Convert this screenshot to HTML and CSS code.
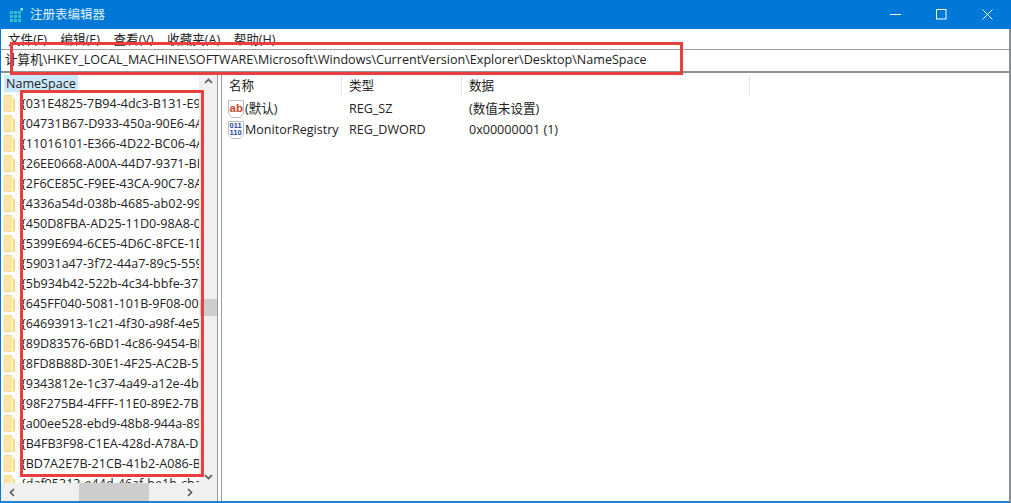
FILE: index.html
```html
<!DOCTYPE html>
<html lang="zh-CN">
<head>
<meta charset="utf-8">
<title>注册表编辑器</title>
<link rel="stylesheet" href="styles.css">
</head>
<body>
<svg class="defs" width="0" height="0" aria-hidden="true">
  <symbol id="folder" viewBox="0 0 14 17">
    <path d="M3 .5H10.5L11.5 3V16.5H3Z" fill="#fce7a6" stroke="#f3dc94"/>
    <path d="M11.5 3.5H14V16.5H11.5Z" fill="#f7d97f"/>
    <path d="M11.5 3V16" stroke="#fff6d8"/>
  </symbol>
</svg>
<div class="window">
  <header class="titlebar">
    <div class="title-left">
      <svg class="app-icon" width="14" height="14" viewBox="0 0 14 14">
        <g fill="#35c2c9">
          <rect x="0" y="3" width="3" height="3"/><rect x="4" y="3" width="3" height="3"/><rect x="8" y="3" width="3" height="3"/>
          <rect x="0" y="7" width="3" height="3"/><rect x="4" y="7" width="3" height="3"/><rect x="8" y="7" width="3" height="3"/>
          <rect x="0" y="11" width="3" height="3"/><rect x="4" y="11" width="3" height="3"/><rect x="8" y="11" width="3" height="3"/>
        </g>
        <rect x="10.5" y="0" width="2.5" height="2.5" fill="#9fe3e6"/>
      </svg>
      <span class="title-text">注册表编辑器</span>
    </div>
    <div class="controls">
      <svg width="11" height="11" viewBox="0 0 11 11"><path d="M0 5.5H11" stroke="#fff"/></svg>
      <svg width="11" height="11" viewBox="0 0 11 11"><rect x=".5" y=".5" width="9.5" height="9.5" fill="none" stroke="#fff"/></svg>
      <svg width="11" height="11" viewBox="0 0 11 11"><path d="M.5.5L10.5 10.5M10.5.5L.5 10.5" stroke="#fff"/></svg>
    </div>
  </header>
  <nav class="menu">
    <span>文件(F)</span><span>编辑(E)</span><span>查看(V)</span><span>收藏夹(A)</span><span>帮助(H)</span>
  </nav>
  <div class="address">计算机\HKEY_LOCAL_MACHINE\SOFTWARE\Microsoft\Windows\CurrentVersion\Explorer\Desktop\NameSpace</div>
  <main class="panes">
    <section class="tree">
      <div class="tree-body">
        <div class="tree-list">
          <div class="tree-head"><span class="selected">NameSpace</span></div>
          <div class="node"><svg class="fld"><use href="#folder"/></svg><span>{031E4825-7B94-4dc3-B131-E946B44C8DD5}</span></div>
          <div class="node"><svg class="fld"><use href="#folder"/></svg><span>{04731B67-D933-450a-90E6-4ACD2E9408FE}</span></div>
          <div class="node"><svg class="fld"><use href="#folder"/></svg><span>{11016101-E366-4D22-BC06-4ADA335C892B}</span></div>
          <div class="node"><svg class="fld"><use href="#folder"/></svg><span>{26EE0668-A00A-44D7-9371-BEB064C98683}</span></div>
          <div class="node"><svg class="fld"><use href="#folder"/></svg><span>{2F6CE85C-F9EE-43CA-90C7-8A9BD53A2467}</span></div>
          <div class="node"><svg class="fld"><use href="#folder"/></svg><span>{4336a54d-038b-4685-ab02-99bb52d3fb8b}</span></div>
          <div class="node"><svg class="fld"><use href="#folder"/></svg><span>{450D8FBA-AD25-11D0-98A8-0800361B1103}</span></div>
          <div class="node"><svg class="fld"><use href="#folder"/></svg><span>{5399E694-6CE5-4D6C-8FCE-1D8870FDCBA0}</span></div>
          <div class="node"><svg class="fld"><use href="#folder"/></svg><span>{59031a47-3f72-44a7-89c5-5595fe6b30ee}</span></div>
          <div class="node"><svg class="fld"><use href="#folder"/></svg><span>{5b934b42-522b-4c34-bbfe-37a3ef7b9c90}</span></div>
          <div class="node"><svg class="fld"><use href="#folder"/></svg><span>{645FF040-5081-101B-9F08-00AA002F954E}</span></div>
          <div class="node"><svg class="fld"><use href="#folder"/></svg><span>{64693913-1c21-4f30-a98f-4e52906d3b56}</span></div>
          <div class="node"><svg class="fld"><use href="#folder"/></svg><span>{89D83576-6BD1-4c86-9454-BEB04E94C819}</span></div>
          <div class="node"><svg class="fld"><use href="#folder"/></svg><span>{8FD8B88D-30E1-4F25-AC2B-553D3D65F0EA}</span></div>
          <div class="node"><svg class="fld"><use href="#folder"/></svg><span>{9343812e-1c37-4a49-a12e-4b2d810d956b}</span></div>
          <div class="node"><svg class="fld"><use href="#folder"/></svg><span>{98F275B4-4FFF-11E0-89E2-7B86DFD72085}</span></div>
          <div class="node"><svg class="fld"><use href="#folder"/></svg><span>{a00ee528-ebd9-48b8-944a-8942113d46ac}</span></div>
          <div class="node"><svg class="fld"><use href="#folder"/></svg><span>{B4FB3F98-C1EA-428d-A78A-D1F5659CBA93}</span></div>
          <div class="node"><svg class="fld"><use href="#folder"/></svg><span>{BD7A2E7B-21CB-41b2-A086-B309680C6B7E}</span></div>
          <div class="node"><svg class="fld"><use href="#folder"/></svg><span>{daf95313-e44d-46af-be1b-cbacea2c3065}</span></div>
        </div>
        <div class="vscroll">
          <svg class="arrow" width="9" height="6" viewBox="0 0 9 6"><path d="M1 5L4.5 1.5L8 5" fill="none" stroke="#555" stroke-width="1.6"/></svg>
          <div class="vtrack"><div class="vthumb"></div></div>
          <svg class="arrow" width="9" height="6" viewBox="0 0 9 6"><path d="M1 1L4.5 4.5L8 1" fill="none" stroke="#555" stroke-width="1.6"/></svg>
        </div>
      </div>
      <div class="hscroll">
        <svg width="6" height="9" viewBox="0 0 6 9"><path d="M5 1L1.5 4.5L5 8" fill="none" stroke="#555" stroke-width="1.6"/></svg>
        <div class="htrack"><div class="hthumb"></div></div>
        <svg width="6" height="9" viewBox="0 0 6 9"><path d="M1 1L4.5 4.5L1 8" fill="none" stroke="#555" stroke-width="1.6"/></svg>
      </div>
    </section>
    <section class="list">
      <div class="row head">
        <div class="c1 cell">名称</div><div class="c2 cell">类型</div><div class="c3 cell">数据</div><div class="c4"></div>
      </div>
      <div class="row item">
        <div class="c1 name">
          <svg width="16" height="18" viewBox="0 0 16 18"><path d="M.5.5H15.5V13.5L12.5 17.5H3.5L.5 13.5Z" fill="#fff" stroke="#b9bfc9"/><text x="1.5" y="11.5" class="ab">ab</text></svg>
          <span>(默认)</span>
        </div>
        <div class="c2">REG_SZ</div><div class="c3">(数值未设置)</div>
      </div>
      <div class="row item">
        <div class="c1 name">
          <svg width="16" height="18" viewBox="0 0 16 18"><path d="M.5.5H15.5V13.5L12.5 17.5H3.5L.5 13.5Z" fill="#fff" stroke="#b9bfc9"/><text x="1.5" y="7" class="bin">011</text><text x="1.5" y="14" class="bin">110</text></svg>
          <span>MonitorRegistry</span>
        </div>
        <div class="c2">REG_DWORD</div><div class="c3">0x00000001 (1)</div>
      </div>
    </section>
  </main>
  <div class="mark mark-address"></div>
  <div class="mark mark-tree"></div>
</div>
</body>
</html>
```
FILE: styles.css
```css
* { box-sizing: border-box; }
html, body { margin: 0; height: 100%; }
body { background: #fff; overflow: hidden; }
.defs { position: absolute; }
.window {
  position: relative;
  width: 1011px;
  height: 503px;
  display: flex;
  flex-direction: column;
  background: #fff;
  border-left: 1px solid #0078d7;
  border-right: 2px solid #8a8f94;
  border-bottom: 2px solid #2b7fc4;
  font-family: "Open Sans", "Noto Sans CJK SC", sans-serif;
  font-size: 12.57px;
  color: #222;
}
.titlebar {
  height: 29px;
  margin: 0 -2px 0 -1px;
  background: #0078d7;
  display: flex;
  align-items: center;
  justify-content: space-between;
  color: #fff;
  flex: none;
}
.title-left { display: flex; align-items: center; gap: 6px; padding-left: 10px; }
.title-text { font-size: 12.5px; color: #dff0fb; padding-bottom: 3px; }
.controls { display: flex; gap: 35px; padding-right: 18px; align-items: center; }
.menu {
  height: 20px;
  flex: none;
  display: flex;
  gap: 13.5px;
  padding: 1px 0 0 7px;
  align-items: center;
  line-height: 20px;
  overflow: hidden;
}
.address {
  height: 24px;
  flex: none;
  border-top: 1px solid #a0a0a0;
  border-bottom: 2px solid #909090;
  padding-left: 4px;
  line-height: 20px;
  white-space: nowrap;
}
.panes { flex: 1; min-height: 0; display: flex; }
.tree {
  width: 217px;
  flex: none;
  display: flex;
  flex-direction: column;
  border-right: 1px solid #9b9b9b;
  overflow: hidden;
}
.tree-body { flex: 1; min-height: 0; display: flex; }
.tree-list { width: 198px; flex: none; overflow: hidden; }
.tree-head { height: 20px; padding: 2px 0 0 3px; }
.selected { display: inline-block; background: #cce8ff; height: 17px; line-height: 17px; padding: 0 2px; }
.node { height: 20px; display: flex; align-items: center; white-space: nowrap; line-height: 20px; padding-top: 1px; }
.fld { width: 14px; height: 17px; flex: none; margin-right: 6px; }
.vscroll {
  width: 18px;
  flex: none;
  background: #f0f0f0;
  display: flex;
  flex-direction: column;
  align-items: center;
  padding: 5px 0 3px;
  gap: 2px;
}
.vtrack { flex: 1; width: 100%; padding-top: 213px; }
.vthumb { height: 17px; background: #cdcdcd; margin-left: 1px; }
.hscroll {
  height: 18px;
  flex: none;
  background: #f0f0f0;
  display: flex;
  align-items: center;
  padding: 0 24px 0 8px;
}
.htrack { flex: 1; height: 100%; padding-left: 64px; }
.hthumb { width: 70px; height: 100%; background: #cdcdcd; }
.list { flex: 1; min-width: 0; margin-left: 3px; border-left: 1px solid #9b9b9b; }
.row { display: flex; }
.head { height: 23px; line-height: 20px; padding-top: 3px; margin-bottom: 2px; }
.cell { border-right: 1px solid #e5e5e5; padding-left: 7px; }
.item { height: 21px; line-height: 21px; }
.c1 { width: 120px; flex: none; }
.c2 { width: 120px; flex: none; padding-left: 7px; }
.c3 { width: 288px; flex: none; padding-left: 7px; }
.c4 { flex: 1; }
.name { display: flex; align-items: center; gap: 1px; padding-left: 6px; white-space: nowrap; }
.ab { font-family: "Liberation Sans", sans-serif; font-weight: 700; font-size: 11.5px; fill: #c8452c; }
.bin { font-family: "Liberation Sans", sans-serif; font-weight: 700; font-size: 7.5px; fill: #1c45a0; }
.mark { position: absolute; border: 3px solid #e84040; pointer-events: none; }
.mark-address { left: 9px; top: 42px; width: 673px; height: 33px; }
.mark-tree { left: 19px; top: 90px; width: 184px; height: 387px; }
```
